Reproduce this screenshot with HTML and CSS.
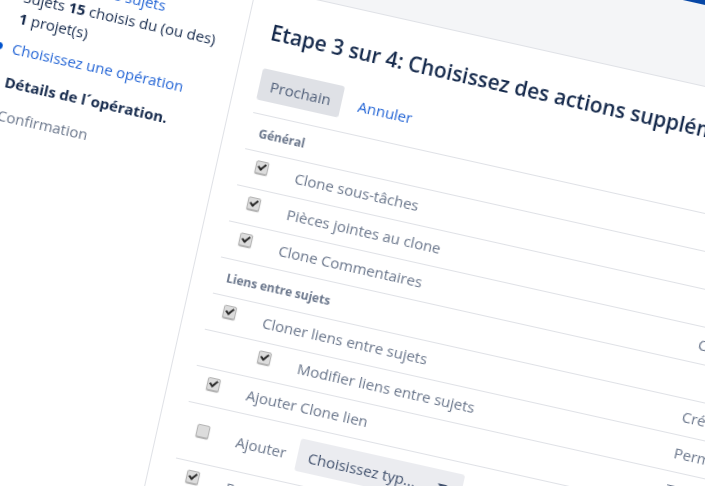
FILE: index.html
```html
<!DOCTYPE html>
<html lang="fr">
<head>
<meta charset="utf-8">
<title>Etape 3 sur 4</title>
<link rel="stylesheet" href="styles.css">
</head>
<body>
<div class="stage">
  <header class="topbar"></header>
  <div class="page">
    <aside class="sidebar">
      <a class="step-link" href="#">Choisissez les sujets</a>
      <p class="step-detail">Sujets <b>15</b> choisis du (ou des)<br><b>1</b> projet(s)</p>
      <a class="step-link step-gap" href="#"><span class="dot"></span>Choisissez une opération</a>
      <p class="step-current">Détails de l´opération.</p>
      <p class="step-next">Confirmation</p>
    </aside>
    <main class="main">
      <section class="panel">
        <h1 class="title">Etape 3 sur 4: Choisissez des actions supplémentaires</h1>
        <div class="actions">
          <button class="btn" type="button">Prochain</button>
          <a class="cancel" href="#">Annuler</a>
        </div>
        <div class="table">
          <div class="row head">Général</div>
          <div class="row"><span class="box on"></span><span class="label">Clone sous-tâches</span></div>
          <div class="row"><span class="box on"></span><span class="label">Pièces jointes au clone</span></div>
          <div class="row"><span class="box on"></span><span class="label">Clone Commentaires</span><span class="note">Clone</span></div>
          <div class="row head">Liens entre sujets</div>
          <div class="row"><span class="box on"></span><span class="label">Cloner liens entre sujets</span><span class="note">Créer</span></div>
          <div class="row indent"><span class="box on"></span><span class="label">Modifier liens entre sujets</span><span class="note">Permet</span></div>
          <div class="row"><span class="box on"></span><span class="label">Ajouter Clone lien</span><span class="note">Tous</span></div>
          <div class="row tall"><span class="box"></span><span class="label short">Ajouter</span><span class="select">Choisissez typ...<i class="caret"></i></span><span class="tail">lien</span></div>
          <div class="row"><span class="box on"></span><span class="label">Remplacer</span></div>
        </div>
      </section>
    </main>
  </div>
</div>
</body>
</html>
```
FILE: styles.css
```css
html, body { margin: 0; height: 100%; overflow: hidden; background: #fff; }
.stage {
  width: 1200px;
  height: 900px;
  transform-origin: 0 0;
  transform: translate(-10.6px, -197px) rotate(12.6deg);
  filter: blur(0.3px);
  font-family: "Open Sans", "Noto Sans", sans-serif;
  font-size: 15px;
  color: #172b4d;
  display: flex;
  flex-direction: column;
}
.topbar { height: 41px; background: #0747a6; flex: none; }
.page { display: flex; flex: 1; }
.sidebar { width: 300px; flex: none; padding: 109px 10px 0 76px; box-sizing: border-box; line-height: 19px; }
.sidebar p { margin: 0; }
.step-link { color: #2566d6; text-decoration: none; display: block; position: relative; }
.sidebar .step-detail { margin-top: 1px; line-height: 22px; }
.step-gap { margin-top: 11px; }
.dot { position: absolute; left: -17px; top: 6px; width: 7px; height: 7px; border-radius: 50%; background: #0052cc; }
.sidebar .step-current { font-weight: 700; margin-top: 15px; }
.sidebar .step-next { color: #6b778c; margin-top: 15px; }
.main { flex: 1; background: #f4f5f7; padding-top: 79px; }
.panel { background: #fff; border-left: 1px solid #dfe1e6; border-top: 1px solid #dfe1e6; height: 100%; padding: 0 0 0 24px; box-sizing: border-box; }
.title { font-size: 20.9px; font-weight: 600; margin: 27px 0 0; line-height: 28px; white-space: nowrap; }
.actions { display: flex; align-items: center; gap: 17px; margin-top: 23px; }
.btn { width: 84px; height: 32px; border: 0; border-radius: 3px; background: #dfe1e6; color: #505f79; font: inherit; padding: 0; }
.cancel { color: #2566d6; text-decoration: none; }
.table { margin-top: 13px; border-top: 1px solid #dfe1e6; }
.row { height: 36px; border-bottom: 1px solid #dfe1e6; display: flex; align-items: center; padding-left: 14px; color: #6b778c; white-space: nowrap; }
.row.head { font-size: 12px; font-weight: 700; padding-left: 10px; }
.row.tall { height: 57px; }
.row.indent { padding-left: 58px; }
.row.indent .label { width: 386px; }
.box { width: 13px; height: 13px; flex: none; border: 1px solid #b5b5b5; border-radius: 2px; background: #dcdcdc; box-shadow: 0 1px 1px #aaa; box-sizing: border-box; margin: 0 28px 7px 0; position: relative; }
.box.on::after { content: ""; position: absolute; left: 3px; top: 0; width: 3px; height: 6px; border: solid #2a2a2a; border-width: 0 2.5px 2.5px 0; transform: rotate(40deg); }
.label { width: 430px; margin-bottom: 2px; }
.label.short { width: 63px; }
.select { width: 168px; height: 33px; border-radius: 3px; background: #ebecf0; color: #42526e; display: flex; align-items: center; padding-left: 11px; box-sizing: border-box; position: relative; margin-bottom: 2px; }
.caret { position: absolute; right: 15px; top: 14px; border: 5px solid transparent; border-top-color: #42526e; }
.tail { padding-left: 8px; margin-bottom: 2px; }
.note { margin-bottom: 2px; }
```
